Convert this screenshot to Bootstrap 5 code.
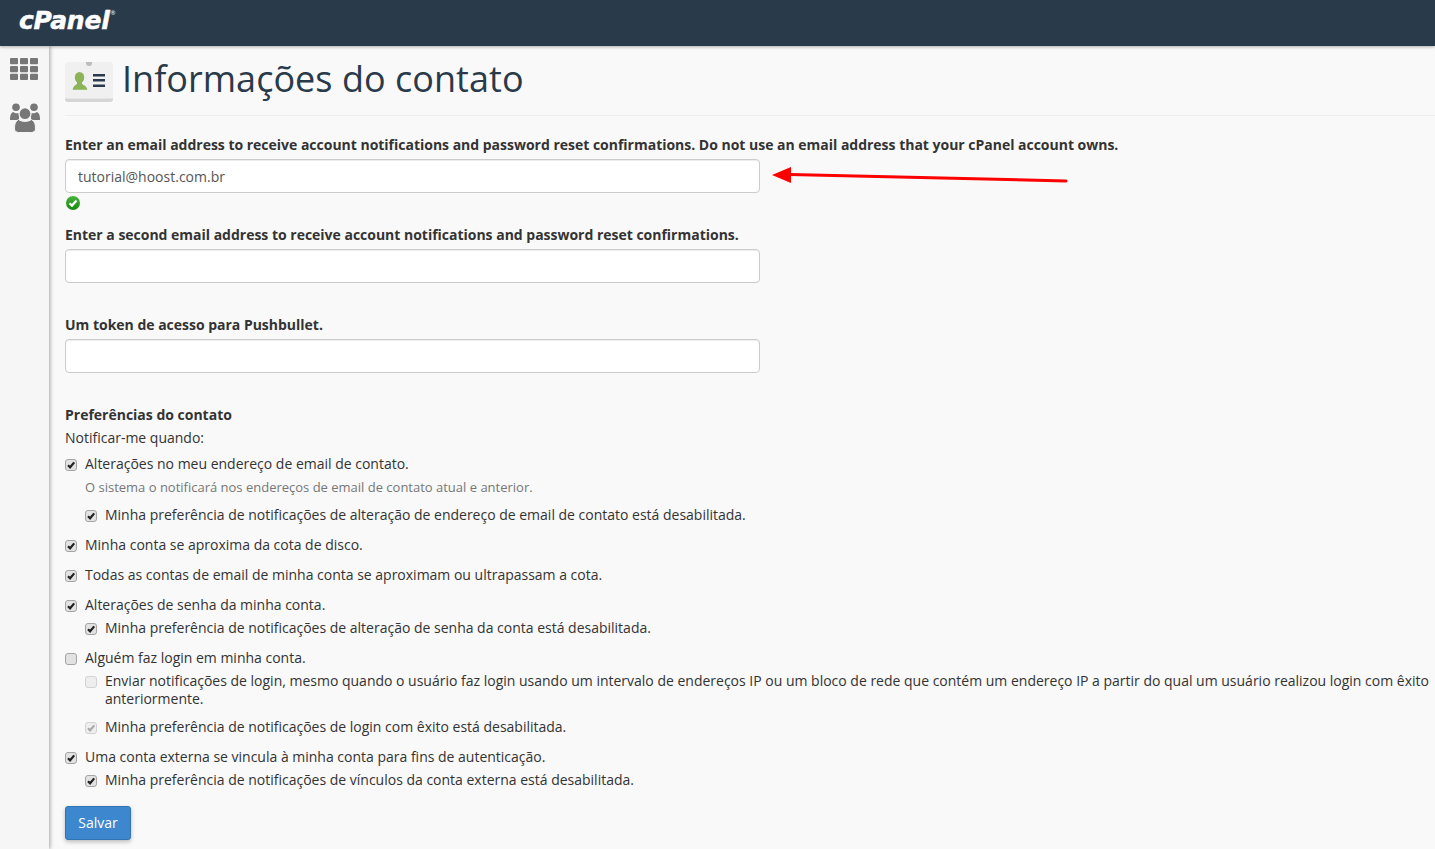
<!DOCTYPE html>
<html lang="pt-BR">
<head>
<meta charset="utf-8">
<title>Informações do contato</title>
<link rel="stylesheet" href="https://cdn.jsdelivr.net/npm/bootstrap@5.3.0/dist/css/bootstrap.min.css">
<style>
html,body{height:100%;overflow:hidden}
body{font-family:"Open Sans",sans-serif;font-size:14px;line-height:20px;color:#333;background:#f9f9f9;letter-spacing:-.004px}
.topbar{height:46px;background:#293a4a;box-shadow:0 1px 3px rgba(0,0,0,.3);position:relative;z-index:2}
.logo-text{font-family:"DejaVu Sans",sans-serif;font-weight:700;font-style:italic;font-size:25px;line-height:41px;color:#fff;margin-left:19px;letter-spacing:-.2px;-webkit-text-stroke:.5px #fff}
.logo-text sup{font-family:"Open Sans",sans-serif;font-size:6px;font-weight:400;top:-14px;letter-spacing:0;margin-left:1px;font-style:normal;-webkit-text-stroke:0}
.sidebar{width:49px;flex:none;height:803px;background:#f6f6f6;box-shadow:1px 0 4px rgba(0,0,0,.35);padding:12px 0 0 10px}
.side-users{margin-top:23px}
.main-col{padding:0 0 0 16px;min-width:0;flex:1}
.page-head{height:70px;border-bottom:1px solid #eee;margin-bottom:19px;gap:9px;padding-top:16px;align-items:flex-start}
.page-head h1{font-size:36px;line-height:34px;font-weight:400;margin:0;color:#293a4a;font-family:"Open Sans",sans-serif;letter-spacing:.03px}
.field-lbl{display:block;font-weight:700;margin-bottom:4px;height:20px;letter-spacing:-.012px}
.field-box{width:695px;height:34px;border:1px solid #ccc;border-radius:4px;padding:6px 12px;font-size:14px;line-height:20px;color:#555;background:#fff;box-shadow:inset 0 1px 1px rgba(0,0,0,.075)}
.field-msg{height:32px;padding-top:3px}
.ok-mark{margin-left:1px}
.check-row{display:flex;gap:8px;align-items:flex-start;margin:0;line-height:20px}
.check-row input{appearance:none;-webkit-appearance:none;flex:none;width:12px;height:12px;margin:5px 0 0 0;border:1px solid #a4a4a4;border-radius:3px;background:#e2e2e2 center/10px 10px no-repeat}
.check-row input:checked{background-image:url("data:image/svg+xml,%3Csvg xmlns='http://www.w3.org/2000/svg' viewBox='0 0 10 10'%3E%3Cpath d='M2 5.200 4.100 7.300 8.200 2.400' fill='none' stroke='%23222' stroke-width='2.200'/%3E%3C/svg%3E")}
.check-row input:disabled{background-color:#eee;border-color:#d2d2d2}
.check-row input:disabled:checked{background-image:url("data:image/svg+xml,%3Csvg xmlns='http://www.w3.org/2000/svg' viewBox='0 0 10 10'%3E%3Cpath d='M2 5.200 4.100 7.300 8.200 2.400' fill='none' stroke='%23aaa' stroke-width='2.200'/%3E%3C/svg%3E")}
.sub{padding-left:20px}
.two-line{line-height:18px;padding-top:1px}
.two-line input{margin-top:4px}
.hint{font-size:13px;line-height:19px;color:#777;padding-left:20px;margin-top:4px;margin-bottom:8px}
.gap-big{margin-top:10px}
.gap-tight{margin-top:9px}
.gap-small{margin-top:3px}
.pref-first{margin-top:6px}
.arrow-mark{position:absolute;left:720px;top:118px}
.btn-save{background:#3c87cd;border:1px solid #2f75b6;color:#fff;font-size:14px;line-height:20px;padding:6px 12px;border-radius:3px;box-shadow:0 2px 4px rgba(0,0,0,.25);margin-top:16px;width:66px}
.btn-save:hover{background:#3c87cd;color:#fff}
</style>
</head>
<body>
<header class="topbar d-flex align-items-start"><div class="logo-text">cPanel<sup>®</sup></div></header>
<div class="d-flex">
  <nav class="sidebar d-flex flex-column align-items-start">
    <svg width="28" height="22" viewBox="0 0 28 22" fill="#777" aria-label="Início">
      <rect x="0" y="0" width="8" height="6.300" rx="1"/><rect x="10" y="0" width="8" height="6.300" rx="1"/><rect x="20" y="0" width="8" height="6.300" rx="1"/>
      <rect x="0" y="7.900" width="8" height="6.300" rx="1"/><rect x="10" y="7.900" width="8" height="6.300" rx="1"/><rect x="20" y="7.900" width="8" height="6.300" rx="1"/>
      <rect x="0" y="15.700" width="8" height="6.300" rx="1"/><rect x="10" y="15.700" width="8" height="6.300" rx="1"/><rect x="20" y="15.700" width="8" height="6.300" rx="1"/>
    </svg>
    <svg class="side-users" width="30" height="30" viewBox="0 0 30 30" fill="#777" aria-label="Usuários">
      <circle cx="6" cy="4.300" r="3.800"/><circle cx="24" cy="4.300" r="3.800"/>
      <path d="M0 17c0-5 1-7 3-8 1.500 1 2.500 1.300 4 1.300h2V17H2.500C1 17 0 17 0 17zM30 17c0-5-1-7-3-8-1.500 1-2.500 1.300-4 1.300h-2V17h4.500c1.500 0 2.500 0 2.500 0z"/>
      <circle cx="15" cy="10.700" r="6" stroke="#f6f6f6" stroke-width="1.200"/>
      <path d="M4.500 26c0-5 .7-7.500 4-9.500 3 2.500 10 2.500 13 0 3.300 2 4 4.500 4 9.500 0 2-2 3.500-4 3.500h-13c-2 0-4-1.500-4-3.500z" stroke="#f6f6f6" stroke-width="1"/>
    </svg>
  </nav>
  <main class="main-col position-relative">
    <div class="page-head d-flex">
      <svg width="48" height="40" viewBox="0 0 48 40" aria-hidden="true">
        <rect width="48" height="40" rx="3" fill="#f0f0f0"/>
        <path d="M0 36.500h48V37a3 3 0 0 1-3 3H3a3 3 0 0 1-3-3z" fill="#d6d6d6"/>
        <path d="M21 0h6v1a3 3 0 0 1-6 0z" fill="#bcbcbc"/>
        <ellipse cx="14.500" cy="15.500" rx="4.700" ry="5.500" fill="#8cb356"/>
        <path d="M12 19h5v2.500c0 1.500 5 2 5.300 6.200H7.700c.3-4.200 4.300-4.700 4.300-6.200z" fill="#8cb356"/>
        <path d="M28 12h12v2.500H28zM28 17h12v2.500H28zM28 22.500h12v2.500H28z" fill="#293a4a"/>
      </svg>
      <h1>Informações do contato</h1>
    </div>

    <form>
      <label class="field-lbl">Enter an email address to receive account notifications and password reset confirmations. Do not use an email address that your cPanel account owns.</label>
      <input class="field-box d-block" type="text" value="tutorial@hoost.com.br" aria-label="Email">
      <div class="field-msg">
        <svg class="d-block ok-mark" width="14" height="14" viewBox="0 0 14 14" aria-label="Válido"><defs><linearGradient id="okg" x1="0" y1="0" x2="0" y2="1"><stop offset="0" stop-color="#45b53a"/><stop offset="1" stop-color="#1c8714"/></linearGradient></defs><circle cx="7" cy="7" r="7" fill="url(#okg)"/><path d="M3.500 7.200 6 9.600 10.500 4.600" fill="none" stroke="#fff" stroke-width="2.200"/></svg>
      </div>

      <label class="field-lbl">Enter a second email address to receive account notifications and password reset confirmations.</label>
      <input class="field-box d-block" type="text" aria-label="Segundo email">
      <div class="field-msg"></div>

      <label class="field-lbl">Um token de acesso para Pushbullet.</label>
      <input class="field-box d-block" type="text" aria-label="Token">
      <div class="field-msg"></div>

      <div class="fw-bold">Preferências do contato</div>
      <div class="gap-small">Notificar-me quando:</div>

      <div class="pref-first"><label class="check-row"><input type="checkbox" checked>Alterações no meu endereço de email de contato.</label></div>
      <div class="hint">O sistema o notificará nos endereços de email de contato atual e anterior.</div>
      <div class="sub"><label class="check-row"><input type="checkbox" checked>Minha preferência de notificações de alteração de endereço de email de contato está desabilitada.</label></div>

      <div class="gap-big"><label class="check-row"><input type="checkbox" checked>Minha conta se aproxima da cota de disco.</label></div>
      <div class="gap-big"><label class="check-row"><input type="checkbox" checked>Todas as contas de email de minha conta se aproximam ou ultrapassam a cota.</label></div>

      <div class="gap-big"><label class="check-row"><input type="checkbox" checked>Alterações de senha da minha conta.</label></div>
      <div class="sub gap-small"><label class="check-row"><input type="checkbox" checked>Minha preferência de notificações de alteração de senha da conta está desabilitada.</label></div>

      <div class="gap-big"><label class="check-row"><input type="checkbox">Alguém faz login em minha conta.</label></div>
      <div class="sub gap-small"><label class="check-row two-line"><input type="checkbox" disabled>Enviar notificações de login, mesmo quando o usuário faz login usando um intervalo de endereços IP ou um bloco de rede que contém um endereço IP a partir do qual um usuário realizou login com êxito anteriormente.</label></div>
      <div class="sub gap-tight"><label class="check-row"><input type="checkbox" disabled checked>Minha preferência de notificações de login com êxito está desabilitada.</label></div>

      <div class="gap-big"><label class="check-row"><input type="checkbox" checked>Uma conta externa se vincula à minha conta para fins de autenticação.</label></div>
      <div class="sub gap-small"><label class="check-row"><input type="checkbox" checked>Minha preferência de notificações de vínculos da conta externa está desabilitada.</label></div>

      <button type="button" class="btn btn-save">Salvar</button>
    </form>

    <svg class="arrow-mark" width="300" height="24" viewBox="0 0 300 24" aria-hidden="true">
      <path d="M21 10.500 297 17" stroke="#f00" stroke-width="3" stroke-linecap="round" fill="none"/>
      <path d="M3 11 22 3V19z" fill="#f00"/>
    </svg>
  </main>
</div>
<script src="https://cdn.jsdelivr.net/npm/bootstrap@5.3.0/dist/js/bootstrap.bundle.min.js"></script>
</body>
</html>
